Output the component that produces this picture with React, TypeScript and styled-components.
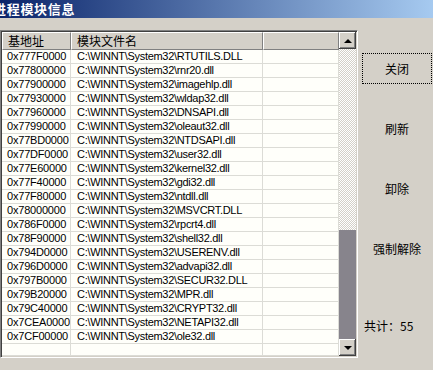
import React from 'react';
import styled, { createGlobalStyle, css } from 'styled-components';

type Module = {
    base: string;
    file: string;
};

const MODULES: Module[] = [
    { base: '0x777F0000', file: 'RTUTILS.DLL' },
    { base: '0x77800000', file: 'rnr20.dll' },
    { base: '0x77900000', file: 'imagehlp.dll' },
    { base: '0x77930000', file: 'wldap32.dll' },
    { base: '0x77960000', file: 'DNSAPI.dll' },
    { base: '0x77990000', file: 'oleaut32.dll' },
    { base: '0x77BD0000', file: 'NTDSAPI.dll' },
    { base: '0x77DF0000', file: 'user32.dll' },
    { base: '0x77E60000', file: 'kernel32.dll' },
    { base: '0x77F40000', file: 'gdi32.dll' },
    { base: '0x77F80000', file: 'ntdll.dll' },
    { base: '0x78000000', file: 'MSVCRT.DLL' },
    { base: '0x786F0000', file: 'rpcrt4.dll' },
    { base: '0x78F90000', file: 'shell32.dll' },
    { base: '0x794D0000', file: 'USERENV.dll' },
    { base: '0x796D0000', file: 'advapi32.dll' },
    { base: '0x797B0000', file: 'SECUR32.DLL' },
    { base: '0x79B20000', file: 'MPR.dll' },
    { base: '0x79C40000', file: 'CRYPT32.dll' },
    { base: '0x7CEA0000', file: 'NETAPI32.dll' },
    { base: '0x7CF00000', file: 'ole32.dll' },
];

const ACTIONS = ['关闭', '刷新', '卸除', '强制解除'];

const App: React.FC = () => {
    return (
        <Window>
            <GlobalStyle />
            <TitleBar>
                <TitleText>进程模块信息</TitleText>
            </TitleBar>
            <Body>
                <ListBox>
                    <ListContent>
                        <Header>
                            <HeaderCell>基地址</HeaderCell>
                            <HeaderCell>模块文件名</HeaderCell>
                            <HeaderCell />
                        </Header>
                        <Rows>
                            {MODULES.map(m => (
                                <Row key={m.base}>
                                    <Cell tight={false}>{m.base}</Cell>
                                    <Cell tight>{`C:\\WINNT\\System32\\${m.file}`}</Cell>
                                    <Cell tight={false} />
                                </Row>
                            ))}
                            <Row filler>
                                <Cell tight={false} />
                                <Cell tight />
                                <Cell tight={false} />
                            </Row>
                        </Rows>
                    </ListContent>
                    <ScrollBar>
                        <ScrollButton>
                            <Arrow dir="up" />
                        </ScrollButton>
                        <Track />
                        <TrackPressed />
                        <ScrollButton>
                            <Arrow dir="down" />
                        </ScrollButton>
                    </ScrollBar>
                </ListBox>
                <SidePanel>
                    {ACTIONS.map((a, i) => (
                        <ActionButton key={a} focused={i === 0}>
                            {a}
                        </ActionButton>
                    ))}
                    <Total>共计：55</Total>
                </SidePanel>
            </Body>
        </Window>
    );
};

const FACE = '#d4d0c8';
const SHADOW = '#808080';
const DARK = '#404040';
const GRID = '#dcdcd6';
const CJK = `"Noto Sans CJK SC", "Liberation Sans", sans-serif`;

const GlobalStyle = createGlobalStyle`
    html, body {
        margin: 0;
        padding: 0;
        background: ${FACE};
        overflow: hidden;
    }
`;

const Window = styled.div`
    width: 433px;
    height: 370px;
    display: flex;
    flex-direction: column;
    background: ${FACE};
    font-family: ${CJK};
    color: #000;
`;

const TitleBar = styled.div`
    height: 18px;
    display: flex;
    align-items: center;
    background: linear-gradient(to right, #0a246a, #a6caf0);
    overflow: hidden;
`;

const TitleText = styled.span`
    margin-left: -7px;
    color: #fff;
    font-weight: bold;
    font-size: 13px;
    letter-spacing: 0.7px;
    line-height: 18px;
    white-space: nowrap;
`;

const Body = styled.div`
    display: flex;
    padding-top: 12px;
`;

const ListBox = styled.div`
    width: 358px;
    height: 328px;
    box-sizing: border-box;
    display: flex;
    border-top: 1px solid ${SHADOW};
    border-left: 1px solid ${SHADOW};
    border-right: 1px solid #fff;
    border-bottom: 1px solid #fff;
    box-shadow: inset 1px 1px ${DARK}, inset -1px -1px ${FACE};
    padding: 1px;
`;

const ListContent = styled.div`
    flex: 1;
    display: flex;
    flex-direction: column;
    min-width: 0;
`;

const columns = css`
    display: grid;
    grid-template-columns: 69px 192px 1fr;
`;

const Header = styled.div`
    ${columns}
    height: 18px;
    flex: none;
`;

const HeaderCell = styled.div`
    box-sizing: border-box;
    background: ${FACE};
    border-top: 1px solid #fff;
    border-left: 1px solid #fff;
    border-right: 1px solid ${SHADOW};
    border-bottom: 1px solid ${SHADOW};
    padding-left: 5px;
    font-size: 12px;
    line-height: 15px;
    white-space: nowrap;
`;

const Rows = styled.div`
    flex: 1;
    display: flex;
    flex-direction: column;
    background: #fffffa;
`;

const Row = styled.div<{ filler?: boolean }>`
    ${columns}
    height: 14px;
    flex: none;
    ${p =>
        p.filler &&
        css`
            flex: 1;
            height: auto;
            > * {
                border-bottom: none;
            }
        `}
`;

const Cell = styled.div<{ tight: boolean }>`
    box-sizing: border-box;
    border-right: 1px solid ${GRID};
    border-bottom: 1px solid ${GRID};
    padding-left: ${p => (p.tight ? 6 : 5)}px;
    font-family: 'Liberation Sans', Arial, sans-serif;
    font-size: 11px;
    line-height: 13px;
    letter-spacing: ${p => (p.tight ? -0.3 : -0.2)}px;
    white-space: nowrap;
    overflow: hidden;
`;

const ScrollBar = styled.div`
    width: 17px;
    flex: none;
    display: flex;
    flex-direction: column;
`;

const ScrollButton = styled.div`
    height: 17px;
    flex: none;
    display: flex;
    align-items: center;
    justify-content: center;
    background: ${FACE};
    box-shadow: inset -1px -1px ${DARK}, inset 1px 1px #fff, inset -2px -2px ${SHADOW};
`;

const Arrow = styled.div<{ dir: 'up' | 'down' }>`
    width: 0;
    height: 0;
    border-left: 4px solid transparent;
    border-right: 4px solid transparent;
    ${p =>
        p.dir === 'up'
            ? css`
                  border-bottom: 4px solid #000;
              `
            : css`
                  border-top: 4px solid #000;
              `}
`;

const Track = styled.div`
    height: 181px;
    flex: none;
    background: repeating-conic-gradient(${FACE} 0 25%, #fff 0 50%) 0 0 / 2px 2px;
`;

const TrackPressed = styled.div`
    flex: 1;
    background: #87848c;
`;

const SidePanel = styled.div`
    width: 70px;
    margin-left: 4px;
    display: flex;
    flex-direction: column;
    gap: 29px;
    padding-top: 23px;
`;

const ActionButton = styled.div<{ focused: boolean }>`
    height: 31px;
    box-sizing: border-box;
    display: flex;
    align-items: center;
    justify-content: center;
    font-size: 12px;
    border: 1px dotted ${p => (p.focused ? '#000' : 'transparent')};
`;

const Total = styled.div`
    margin-top: 26px;
    padding-left: 2px;
    font-size: 12px;
    line-height: 14px;
    white-space: nowrap;
`;

export default App;
